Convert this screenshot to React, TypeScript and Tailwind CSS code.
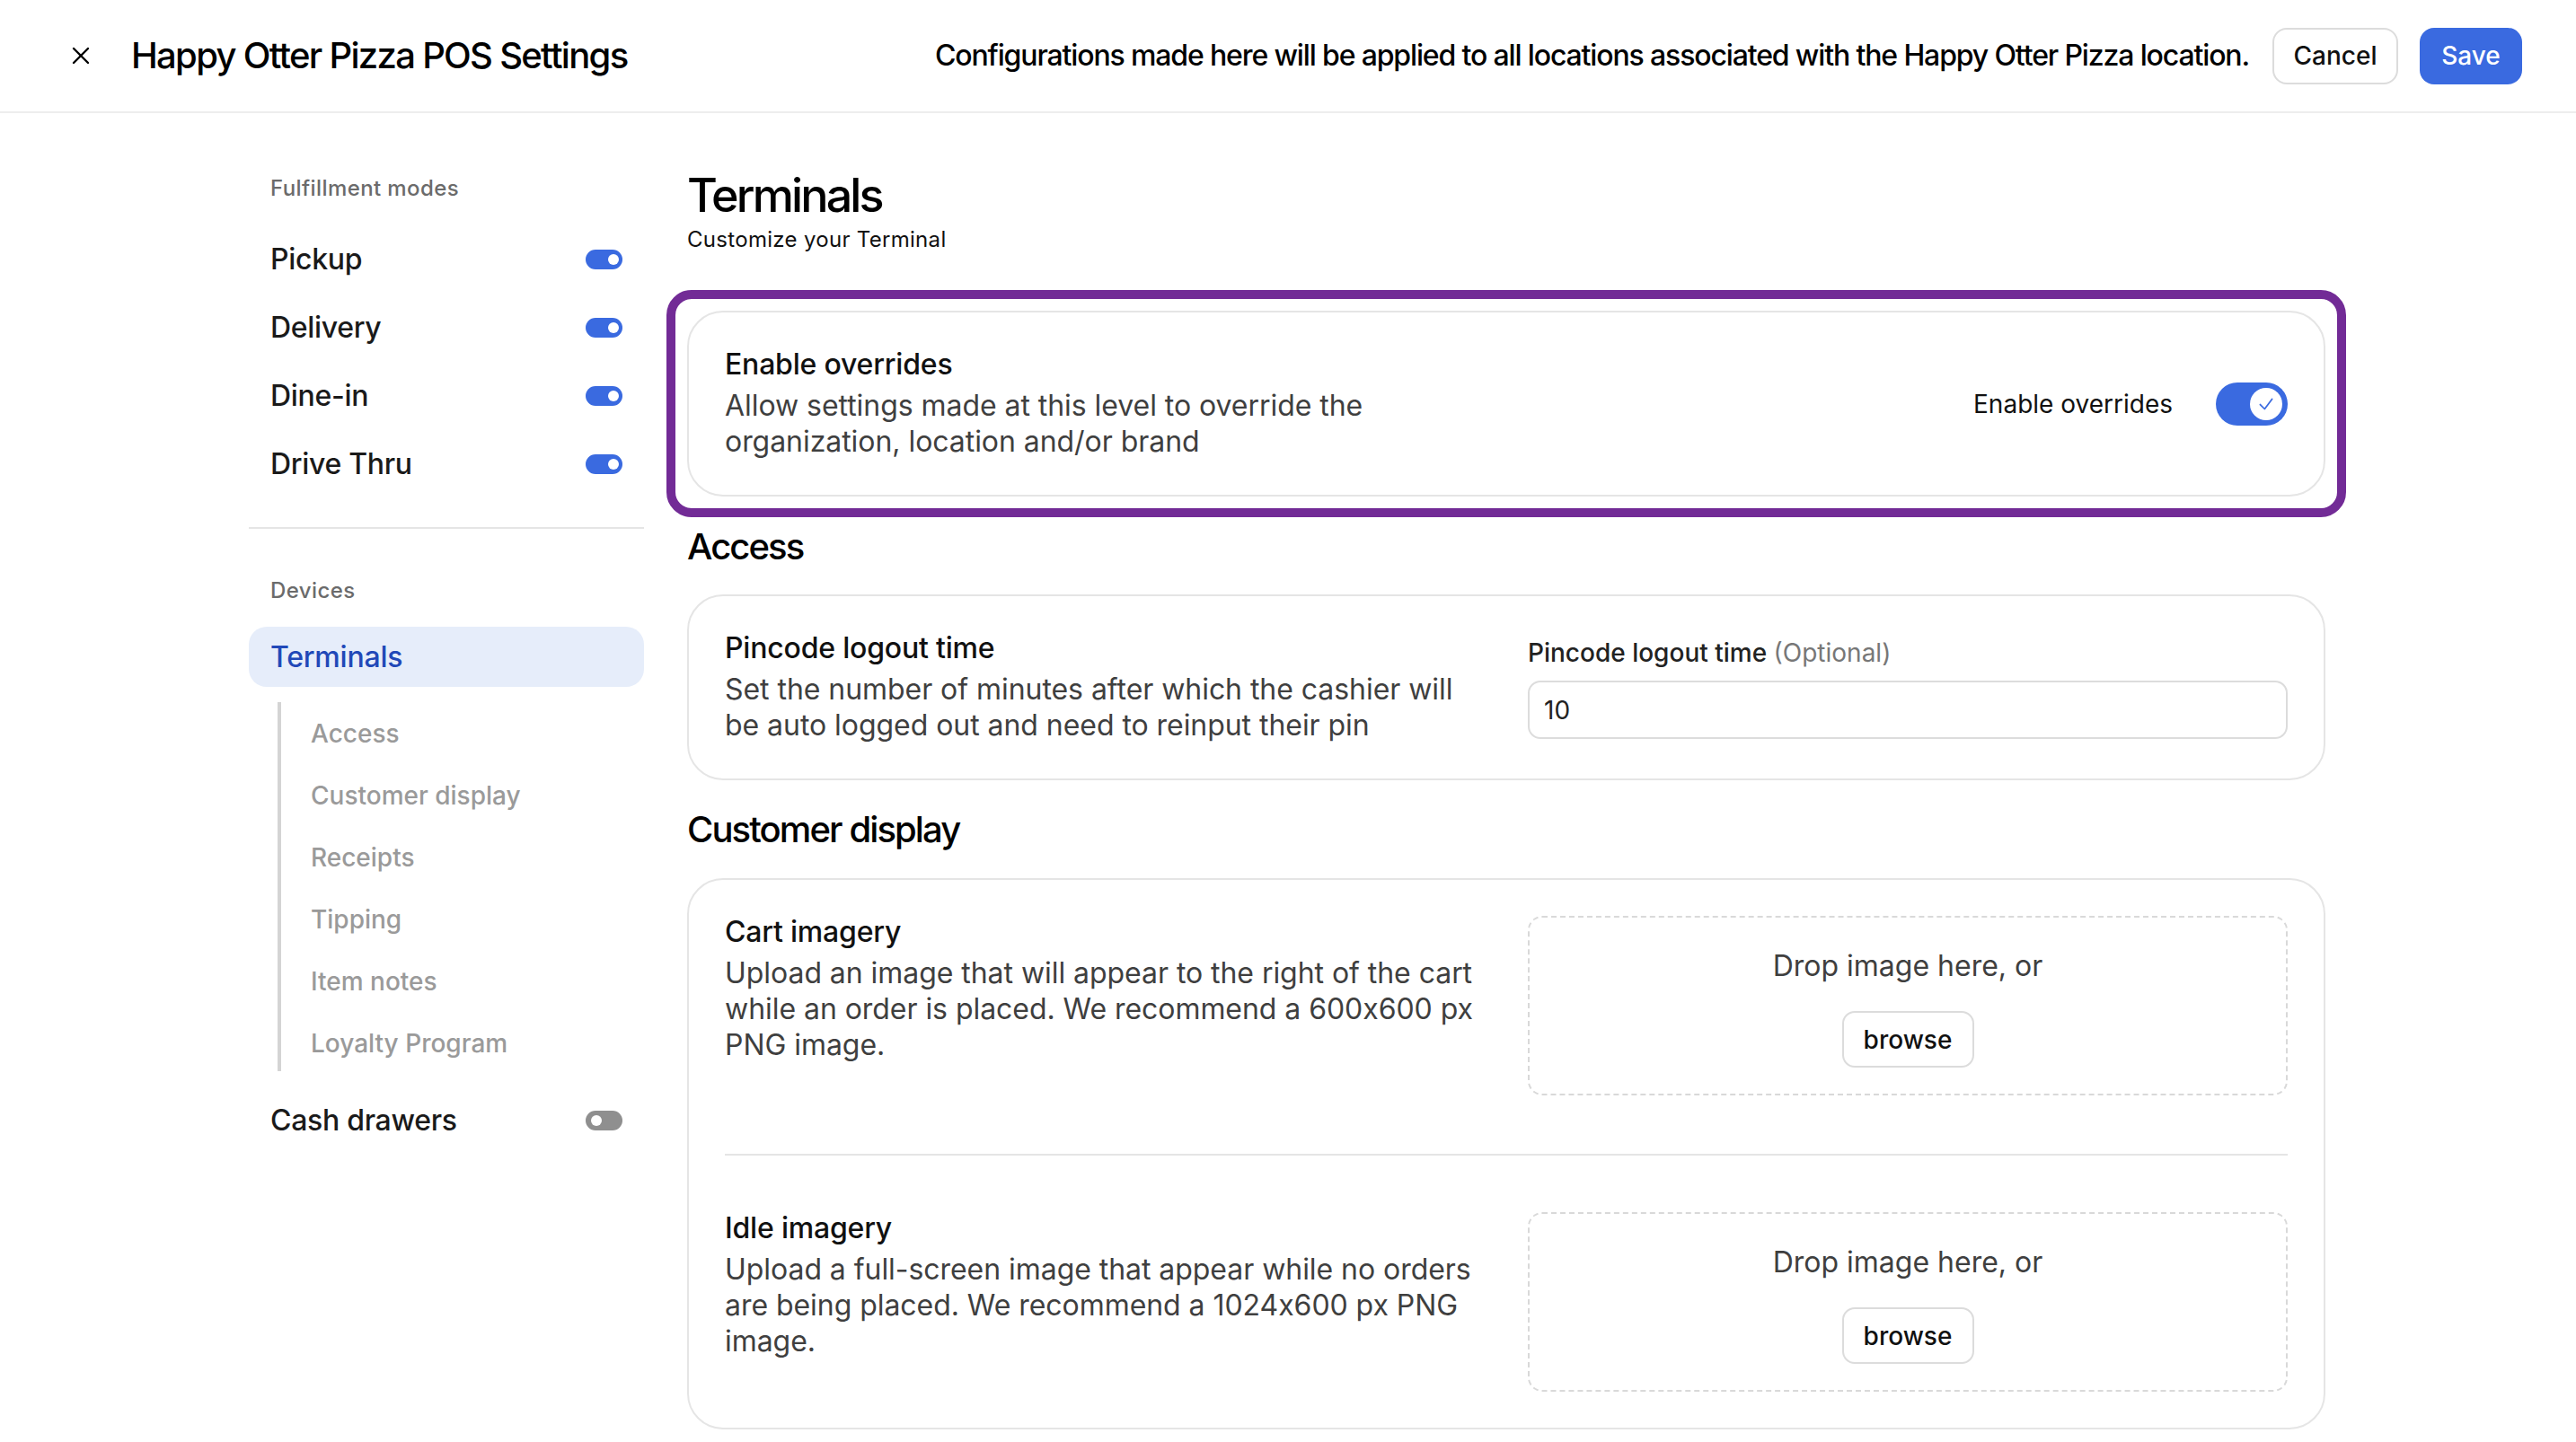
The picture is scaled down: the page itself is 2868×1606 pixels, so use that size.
import { X } from "lucide-react";

const MODES = ["Pickup", "Delivery", "Dine-in", "Drive Thru"];
const SUB_ITEMS = ["Access", "Customer display", "Receipts", "Tipping", "Item notes", "Loyalty Program"];

function SmallToggle({ on }: { on: boolean }) {
  return (
    <div className={on
      ? "flex h-[22px] w-[41px] items-center justify-end rounded-full bg-[#3a6ae0] pr-[4px]"
      : "flex h-[22px] w-[41px] items-center justify-start rounded-full bg-[#8f8f8f] pl-[6px]"}>
      <div className="h-[12px] w-[12px] rounded-full bg-white" />
    </div>
  );
}

function ModeRow({ label, on }: { label: string; on: boolean }) {
  return (
    <div className="flex h-[76px] items-center justify-between pl-[24px] pr-[24px]">
      <span className="text-[32px] font-medium tracking-[-0.3px] text-[#1a1a1a]">{label}</span>
      <SmallToggle on={on} />
    </div>
  );
}

function Dropzone() {
  return (
    <div className="flex h-[200px] flex-col items-center rounded-[16px] border-2 border-dashed border-[#d9d9d9] pt-[28px]">
      <span className="text-[32px] leading-[52px] text-[#3f3f3f]">Drop image here, or</span>
      <button className="mt-[24px] flex h-[63px] w-[147px] items-center justify-center rounded-[14px] border-2 border-[#dcdcdc] bg-white text-[28px] font-medium text-[#111111]">browse</button>
    </div>
  );
}

function SettingText({ title, desc }: { title: string; desc: string }) {
  return (
    <div className="flex flex-col gap-[8px]">
      <h3 className="text-[32px] font-medium leading-[36px] tracking-[-0.2px] text-[#111111]">{title}</h3>
      <p className="text-[32px] leading-[40px] tracking-[-0.05px] text-[#3f3f3f] [font-feature-settings:'calt'_0]">{desc}</p>
    </div>
  );
}

export default function App() {
  return (
    <div className="h-[1606px] overflow-hidden bg-white font-['Inter',sans-serif] text-black">
      <header className="flex h-[126px] items-center border-b-2 border-[#ededed] pl-[74px] pr-[60px]">
        <X className="h-[32px] w-[32px] text-black" strokeWidth={1.8} />
        <h1 className="ml-[40px] text-[40px] font-medium tracking-[-1.7px]">Happy Otter Pizza POS Settings</h1>
        <p className="ml-auto text-[32px] font-medium tracking-[-1.14px] text-black">Configurations made here will be applied to all locations associated with the Happy Otter Pizza location.</p>
        <button className="ml-[26px] flex h-[63px] w-[140px] items-center justify-center rounded-[16px] border-2 border-[#dcdcdc] bg-white text-[28px] font-medium text-[#111111]">Cancel</button>
        <button className="ml-[24px] flex h-[63px] w-[114px] items-center justify-center rounded-[16px] bg-[#3a6ae0] text-[28px] font-medium text-white">Save</button>
      </header>

      <div className="ml-[277px] flex gap-[48px] pt-[64px]">
        <aside className="w-[440px] shrink-0 pt-[4px]">
          <div className="pl-[24px] text-[24px] font-medium leading-[32px] tracking-[0.4px] text-[#6b6b6b]">Fulfillment modes</div>
          <div className="mt-[25px]">
            {MODES.map((m) => (
              <ModeRow key={m} label={m} on />
            ))}
          </div>
          <div className="mt-[32px] h-[2px] bg-[#e5e5e5]" />
          <div className="mt-[53px] pl-[24px] text-[24px] font-medium leading-[32px] tracking-[0.4px] text-[#6b6b6b]">Devices</div>
          <div className="mt-[24px] flex h-[67px] items-center rounded-[20px] bg-[#e6edfa] pl-[24px] text-[32px] font-medium tracking-[-0.2px] text-[#2148b8]">Terminals</div>
          <div className="ml-[32px] mt-[17px] flex flex-col gap-[32px] border-l-4 border-[#d4d4d4] pb-[12px] pl-[33px] pt-[17px]">
            {SUB_ITEMS.map((s) => (
              <div key={s} className="text-[28px] font-medium leading-[37px] text-[#9a9a9a]">{s}</div>
            ))}
          </div>
          <div className="mt-[17px]">
            <ModeRow label="Cash drawers" on={false} />
          </div>
        </aside>

        <main className="w-[1824px]">
          <h2 className="text-[52px] font-medium leading-[56px] tracking-[-2.85px]">Terminals</h2>
          <p className="mt-[3px] text-[24px] leading-[36px] tracking-[0.3px] text-[#111111]">Customize your Terminal</p>

          <div className="relative mt-[61px]">
            <div className="flex h-[207px] items-center justify-between rounded-[40px] border-2 border-[#e5e5e5] px-[40px]">
              <div className="w-[845px]">
                <SettingText title="Enable overrides" desc="Allow settings made at this level to override the organization, location and/or brand" />
              </div>
              <div className="flex items-center gap-[48px]">
                <span className="text-[28px] text-[#111111]">Enable overrides</span>
                <div className="flex h-[48px] w-[80px] items-center justify-end rounded-full bg-[#3a6ae0] pr-[6px]">
                  <div className="flex h-[36px] w-[36px] items-center justify-center rounded-full bg-white">
                    <svg viewBox="0 0 20 20" className="h-[22px] w-[22px]" fill="none" stroke="#3a6ae0" strokeWidth={1.6} strokeLinecap="round" strokeLinejoin="round">
                      <path d="M4 10.5 L8.5 15 L16 5" />
                    </svg>
                  </div>
                </div>
              </div>
            </div>
            <div className="absolute -inset-[23px] rounded-[28px] border-[10px] border-[#722b96]" />
          </div>

          <h2 className="mt-[32px] text-[40px] font-medium leading-[48px] tracking-[-1.9px]">Access</h2>
          <section className="mt-[29px] grid h-[207px] grid-cols-2 gap-[48px] rounded-[40px] border-2 border-[#e5e5e5] px-[40px] pt-[40px]">
            <SettingText title="Pincode logout time" desc="Set the number of minutes after which the cashier will be auto logged out and need to reinput their pin" />
            <div className="pt-[5px]">
              <label className="block text-[28px] font-medium leading-[36px] text-[#222222]">
                Pincode logout time <span className="font-normal text-[#777777]">(Optional)</span>
              </label>
              <input readOnly value="10" className="mt-[13px] h-[65px] w-full rounded-[14px] border-2 border-[#dcdcdc] px-[16px] text-[28px] text-[#222222] outline-none" />
            </div>
          </section>

          <h2 className="mt-[31px] text-[40px] font-medium leading-[48px] tracking-[-1.9px]">Customer display</h2>
          <section className="mt-[30px] rounded-[40px] border-2 border-[#e5e5e5] px-[40px] pt-[40px]">
            <div className="grid h-[200px] grid-cols-2 gap-[48px]">
              <SettingText title="Cart imagery" desc="Upload an image that will appear to the right of the cart while an order is placed. We recommend a 600x600 px PNG image." />
              <Dropzone />
            </div>
            <div className="mt-[65px] h-[2px] bg-[#e5e5e5]" />
            <div className="mt-[63px] grid h-[200px] grid-cols-2 gap-[48px]">
              <SettingText title="Idle imagery" desc="Upload a full-screen image that appear while no orders are being placed. We recommend a 1024x600 px PNG image." />
              <Dropzone />
            </div>
            <div className="h-[40px]" />
          </section>
        </main>
      </div>
    </div>
  );
}
